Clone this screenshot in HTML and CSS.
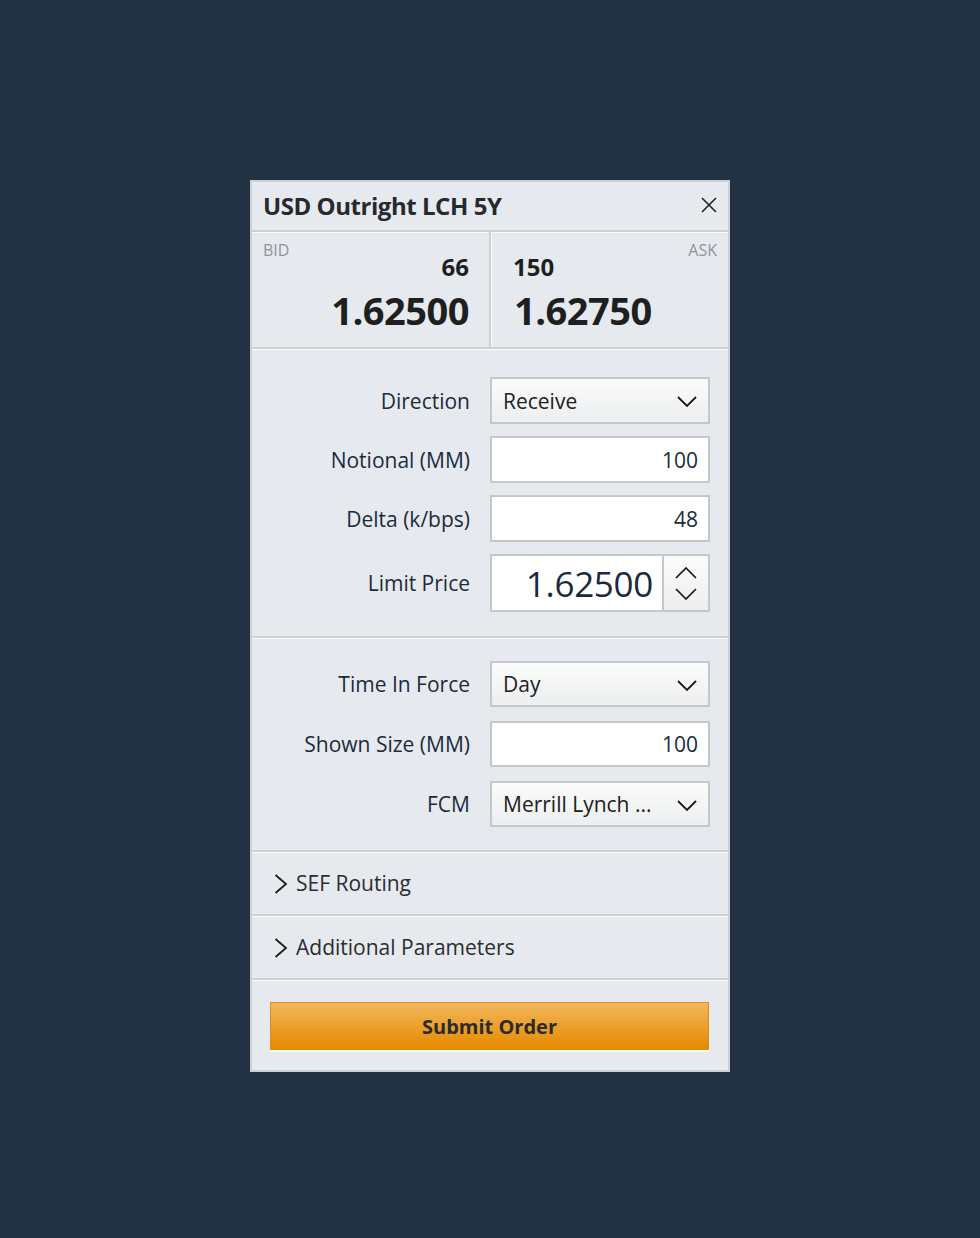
FILE: index.html
```html
<!DOCTYPE html>
<html lang="en">
<head>
<meta charset="utf-8">
<title>USD Outright LCH 5Y</title>
<link rel="stylesheet" href="styles.css">
</head>
<body>
<div class="panel">
  <div class="header">
    <h1 class="title">USD Outright LCH 5Y</h1>
    <button class="close" aria-label="Close">
      <svg width="16" height="16" viewBox="0 0 16 16"><path d="M1 1 L15 15 M15 1 L1 15" stroke="#222" stroke-width="1.6" fill="none"/></svg>
    </button>
  </div>
  <div class="quote">
    <div class="side bid">
      <span class="side-label">BID</span>
      <span class="size">66</span>
      <span class="price">1.62500</span>
    </div>
    <div class="side ask">
      <span class="side-label">ASK</span>
      <span class="size">150</span>
      <span class="price">1.62750</span>
    </div>
  </div>
  <div class="section form form-a">
    <div class="row">
      <span class="label">Direction</span>
      <div class="select"><span class="val">Receive</span><svg class="chev" width="20" height="11" viewBox="0 0 20 11"><path d="M1 1 L10 10 L19 1" stroke="#1a1a1a" stroke-width="1.8" fill="none"/></svg></div>
    </div>
    <div class="row">
      <span class="label">Notional (MM)</span>
      <div class="input">100</div>
    </div>
    <div class="row">
      <span class="label">Delta (k/bps)</span>
      <div class="input">48</div>
    </div>
    <div class="row row-tall">
      <span class="label">Limit Price</span>
      <div class="spin">
        <div class="spin-val">1.62500</div>
        <div class="spin-btns">
          <svg width="22" height="12" viewBox="0 0 22 12"><path d="M1 11 L11 1 L21 11" stroke="#1a1a1a" stroke-width="1.7" fill="none"/></svg>
          <svg width="22" height="12" viewBox="0 0 22 12"><path d="M1 1 L11 11 L21 1" stroke="#1a1a1a" stroke-width="1.7" fill="none"/></svg>
        </div>
      </div>
    </div>
  </div>
  <div class="section form form-b">
    <div class="row">
      <span class="label">Time In Force</span>
      <div class="select"><span class="val">Day</span><svg class="chev" width="20" height="11" viewBox="0 0 20 11"><path d="M1 1 L10 10 L19 1" stroke="#1a1a1a" stroke-width="1.8" fill="none"/></svg></div>
    </div>
    <div class="row">
      <span class="label">Shown Size (MM)</span>
      <div class="input">100</div>
    </div>
    <div class="row">
      <span class="label">FCM</span>
      <div class="select"><span class="val">Merrill Lynch ...</span><svg class="chev" width="20" height="11" viewBox="0 0 20 11"><path d="M1 1 L10 10 L19 1" stroke="#1a1a1a" stroke-width="1.8" fill="none"/></svg></div>
    </div>
  </div>
  <div class="section expander">
    <svg width="14" height="20" viewBox="0 0 14 20"><path d="M1.5 1 L12 10 L1.5 19" stroke="#1a1a1a" stroke-width="1.8" fill="none"/></svg>
    <span>SEF Routing</span>
  </div>
  <div class="section expander">
    <svg width="14" height="20" viewBox="0 0 14 20"><path d="M1.5 1 L12 10 L1.5 19" stroke="#1a1a1a" stroke-width="1.8" fill="none"/></svg>
    <span>Additional Parameters</span>
  </div>
  <div class="section submit-area">
    <button class="submit">Submit Order</button>
  </div>
</div>
</body>
</html>
```

FILE: styles.css
```css
* { box-sizing: border-box; }

html, body {
  margin: 0;
  padding: 0;
}

body {
  background: #233243;
  font-family: "Open Sans", "Noto Sans", sans-serif;
  color: #1f2d3d;
  padding-top: 180px;
}

.panel {
  width: 480px;
  margin: 0 auto;
  background: #e6eaee;
  border: 2px solid #cdd1d5;
}

.header {
  height: 48px;
  display: flex;
  align-items: center;
  justify-content: space-between;
  padding: 0 10px 0 11px;
}

.title {
  margin: 0;
  font-size: 24px;
  font-weight: 700;
  color: #26292d;
  line-height: 1;
  letter-spacing: -0.45px;
}

.close {
  border: 0;
  background: transparent;
  padding: 0;
  width: 18px;
  height: 18px;
  display: flex;
  align-items: center;
  justify-content: center;
  margin-top: -2px;
}

.quote, .section {
  border-top: 2px solid #ccd0d4;
  box-shadow: inset 0 1px 0 #fafbfc;
}

.quote {
  height: 117px;
  display: grid;
  grid-template-columns: 237px 2px 237px;
}

.side {
  display: flex;
  flex-direction: column;
  padding-top: 10px;
}

.quote::before {
  content: "";
  grid-column: 2;
  grid-row: 1;
  background: #ccd0d4;
  box-shadow: 1px 0 0 #fafbfc;
}

.quote .bid {
  grid-column: 1;
  grid-row: 1;
  align-items: flex-end;
  padding-left: 11px;
  padding-right: 20px;
}

.quote .ask {
  grid-column: 3;
  grid-row: 1;
  align-items: flex-start;
  padding-left: 22px;
  padding-right: 11px;
}

.side-label {
  font-size: 16px;
  line-height: 16px;
  color: #8e949a;
}

.bid .side-label { align-self: flex-start; }
.ask .side-label { align-self: flex-end; }

.size {
  font-size: 24px;
  line-height: 24px;
  font-weight: 700;
  color: #1e1f21;
  margin-top: -3px;
}

.price {
  font-size: 38px;
  line-height: 38px;
  font-weight: 700;
  color: #1e1f21;
  margin-top: 12px;
  letter-spacing: -0.5px;
}

.ask .price { margin-left: 1px; }

.form {
  display: flex;
  flex-direction: column;
  padding-right: 18px;
}

.form-a {
  padding-top: 28px;
  padding-bottom: 24px;
  gap: 12px;
}

.form-b {
  padding-top: 23px;
  padding-bottom: 23px;
  gap: 14px;
}

.row {
  display: grid;
  grid-template-columns: 218px 220px;
  column-gap: 20px;
  align-items: center;
  height: 47px;
}

.form-b .row { height: 46px; }

.row-tall { height: 58px; }

.label {
  text-align: right;
  font-size: 21px;
  color: #1b2a3d;
  white-space: nowrap;
}

.select, .input, .spin {
  height: 100%;
  border: 2px solid #c5c8cb;
  font-size: 21px;
}

.select {
  display: flex;
  align-items: center;
  justify-content: space-between;
  padding: 0 11px 0 11px;
  background: linear-gradient(#fbfbfb, #eceeef);
  color: #202020;
}

.chev { margin-top: 2px; }

.input {
  background: #fff;
  display: flex;
  align-items: center;
  justify-content: flex-end;
  padding-right: 10px;
  color: #1b2a3b;
}

.spin {
  display: grid;
  grid-template-columns: 1fr 46px;
  background: #fff;
}

.spin-val {
  display: flex;
  align-items: center;
  justify-content: flex-end;
  padding-right: 9px;
  font-size: 35px;
  color: #1b2a3b;
  letter-spacing: -0.3px;
}

.spin-btns {
  border-left: 2px solid #c5c8cb;
  background: linear-gradient(#fbfbfb, #eceeef);
  display: flex;
  flex-direction: column;
  align-items: center;
  justify-content: center;
  gap: 9px;
}

.expander {
  height: 64px;
  display: flex;
  align-items: center;
  gap: 8px;
  padding-left: 22px;
  font-size: 21px;
  color: #2b2d30;
}

.expander svg { margin-top: 2px; }

.submit-area {
  padding: 22px 19px 20px 18px;
}

.submit {
  width: 100%;
  height: 48px;
  border: 1px solid #e48c0d;
  background: linear-gradient(#f3b75c, #e58900);
  box-shadow: 0 2px 0 #fafbfc;
  font-family: "Open Sans", "Noto Sans", sans-serif;
  font-size: 20px;
  font-weight: 700;
  color: #2b2b2b;
  padding: 0;
}
```
